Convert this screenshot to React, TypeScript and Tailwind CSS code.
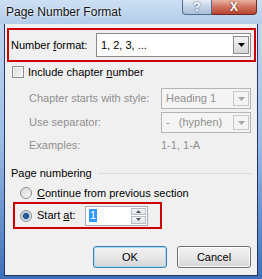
import React from "react";

const font = "font-['Liberation_Sans',Arial,sans-serif]";

const DropArrow = ({ disabled }: { disabled?: boolean }) => (
  <svg width="7" height="4" viewBox="0 0 7 4">
    <path d="M0 0h7L3.5 4z" fill={disabled ? "#a8a8a8" : "#000"} />
  </svg>
);

const Combo = ({
  value,
  width,
  height,
  disabled,
}: {
  value: string;
  width: string;
  height: string;
  disabled?: boolean;
}) => (
  <div
    className={`${width} ${height} flex items-stretch border ${
      disabled
        ? "border-[#b5b5b5] bg-[#f4f4f4] text-[#8f8f8f]"
        : "border-[#8a8a8a] bg-white text-black"
    }`}
  >
    <div className="flex-1 flex items-center pl-[4px] whitespace-pre">{value}</div>
    <div
      className={`w-[16px] my-[2px] mr-[1px] flex items-center justify-center border ${
        disabled
          ? "border-[#c8c8c8] bg-[#f4f4f4]"
          : "border-[#8b8b8b] bg-gradient-to-b from-[#f4f4f4] to-[#d6d6d6]"
      }`}
    >
      <DropArrow disabled={disabled} />
    </div>
  </div>
);

const Radio = ({ checked }: { checked?: boolean }) => (
  <div className="w-[12px] h-[12px] rounded-full border border-[#8b8b8b] bg-gradient-to-br from-[#d6d6d6] to-[#fafafa] flex items-center justify-center">
    {checked && (
      <div className="w-[6px] h-[6px] rounded-full bg-[#2763a8] border border-[#173f73] shadow-[0_0_1px_1px_#9ec2e6]" />
    )}
  </div>
);

const Button = ({ label, primary }: { label: string; primary?: boolean }) => (
  <div
    className={`w-[74px] h-[22px] rounded-[3px] border flex items-center justify-center bg-gradient-to-b from-[#f3f3f3] via-[#e8e8e8] to-[#d4d4d4] ${
      primary
        ? "border-[#3c7fb1] shadow-[inset_0_0_0_1px_#a8dbf6]"
        : "border-[#707070] shadow-[inset_0_0_0_1px_#fbfbfb]"
    }`}
  >
    {label}
  </div>
);

export default function App() {
  return (
    <div
      className={`${font} text-[11px] leading-none relative w-[262px] h-[279px] flex flex-col bg-gradient-to-b from-[#c8dbf1] via-[#9dbde6] to-[#3d70b9] overflow-hidden`}
    >
      <div className="h-[24px] flex items-center pl-[6px] text-[12px] text-[#141414] [text-shadow:0_0_3px_#ffffff] bg-gradient-to-b from-[#cddff3] to-[#b3cceb]">
        Page Number Format
      </div>

      <div className="absolute top-0 left-[182px] flex">
        <div className="w-[30px] h-[15px] rounded-bl-[4px] border border-t-0 border-[#52698f] bg-gradient-to-b from-[#e6eef8] via-[#c3d3e8] to-[#a9bedb] flex items-center justify-center text-white font-bold text-[12px] [text-shadow:0_0_2px_#2a3a55]">
          ?
        </div>
        <div className="w-[45px] h-[15px] rounded-br-[4px] border border-t-0 border-l-0 border-[#6b2a22] bg-gradient-to-b from-[#e8b3a3] via-[#d0705c] to-[#b84332] flex items-center justify-center text-white font-bold text-[12px] [text-shadow:0_0_2px_#4a1010]">
          X
        </div>
      </div>

      <div className="flex-1 ml-[4px] mr-[4px] mb-[3px] bg-[#f0f0f0] border-l border-r border-b border-[#1e3566] flex flex-col text-black">
        <div className="mt-[4px] ml-[2px] w-[249px] h-[34px] border-2 border-[#cc0000] flex items-center pl-[2px]">
          <div className="w-[85px]">
            Number <span className="underline">f</span>ormat:
          </div>
          <Combo value="1, 2, 3, ..." width="w-[155px]" height="h-[24px]" />
        </div>

        <div className="mt-[4px] ml-[7px] h-[12px] flex items-center gap-[4px]">
          <div className="w-[12px] h-[12px] border border-[#8e8f8f] bg-gradient-to-br from-[#dcdcdc] to-[#f8f8f8] shadow-[inset_0_0_0_1px_#f4f4f4]" />
          <div>
            Include chapter <span className="underline">n</span>umber
          </div>
        </div>

        <div className="mt-[10px] ml-[24px] h-[21px] flex items-center text-[#8f8f8f]">
          <div className="w-[132px]">Chapter starts with style:</div>
          <Combo value="Heading 1" width="w-[90px]" height="h-[21px]" disabled />
        </div>

        <div className="mt-[3px] ml-[24px] h-[21px] flex items-center text-[#8f8f8f]">
          <div className="w-[132px]">Use separator:</div>
          <Combo value="-   (hyphen)" width="w-[90px]" height="h-[21px]" disabled />
        </div>

        <div className="mt-[6px] ml-[24px] h-[13px] flex items-center text-[#8f8f8f]">
          <div className="w-[132px]">Examples:</div>
          <div>1-1, 1-A</div>
        </div>

        <div className="mt-[14px] ml-[6px] mr-[6px] h-[14px] flex items-center gap-[6px]">
          <div>Page numbering</div>
          <div className="flex-1 h-px bg-[#d3dde6]" />
        </div>

        <div className="mt-[7px] ml-[15px] h-[12px] flex items-center gap-[5px]">
          <Radio />
          <div>
            <span className="underline">C</span>ontinue from previous section
          </div>
        </div>

        <div className="mt-[3px] ml-[8px] w-[149px] h-[27px] border-2 border-[#cc0000] flex items-center pl-[5px]">
          <Radio checked />
          <div className="w-[53px] pl-[5px]">
            Start <span className="underline">a</span>t:
          </div>
          <div className="w-[63px] h-[20px] border border-[#a5acb5] bg-white flex items-stretch">
            <div className="flex-1 flex items-center pl-[3px]">
              <span className="bg-[#3399ff] text-white px-px py-px">1</span>
            </div>
            <div className="w-[15px] my-px mr-px flex flex-col gap-px">
              <div className="flex-1 border border-[#b7bdc4] bg-gradient-to-b from-[#f6f6f6] to-[#e2e2e2] flex items-center justify-center">
                <svg width="5" height="3" viewBox="0 0 5 3">
                  <path d="M0 3h5L2.5 0z" fill="#4a5a6e" />
                </svg>
              </div>
              <div className="flex-1 border border-[#b7bdc4] bg-gradient-to-b from-[#f6f6f6] to-[#e2e2e2] flex items-center justify-center">
                <svg width="5" height="3" viewBox="0 0 5 3">
                  <path d="M0 0h5L2.5 3z" fill="#4a5a6e" />
                </svg>
              </div>
            </div>
          </div>
        </div>

        <div className="mt-[17px] pr-[6px] flex justify-end gap-[10px]">
          <Button label="OK" primary />
          <Button label="Cancel" />
        </div>
      </div>
    </div>
  );
}
